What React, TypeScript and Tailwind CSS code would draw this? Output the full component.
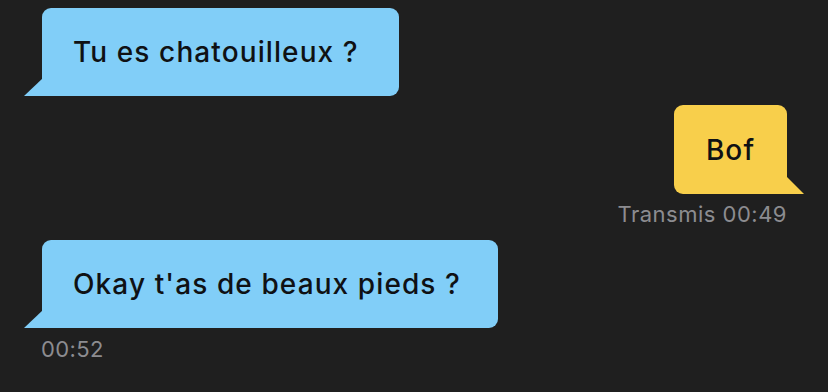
import React from "react";

const Tail = ({ side, color }: { side: "left" | "right"; color: string }) => {
  // the little corner tail under the bubble
  if (side === "left") {
    return (
      <svg
        className="absolute bottom-0 left-[-18px]"
        width="19"
        height="18"
        viewBox="0 0 19 18"
      >
        <path d="M19 0 L19 18 L0 18 Z" fill={color} />
      </svg>
    );
  }
  return (
    <svg
      className="absolute bottom-0 right-[-17px]"
      width="18"
      height="18"
      viewBox="0 0 18 18"
    >
      <path d="M0 0 L0 18 L18 18 Z" fill={color} />
    </svg>
  );
};

const App = () => {
  return (
    <div
      className="w-[828px] h-[392px] bg-[#1f1f1f] overflow-hidden flex flex-col"
      style={{ fontFamily: "Inter, 'Noto Sans', sans-serif" }}
    >
      {/* received */}
      <div className="mt-[8px] ml-[42px] flex">
        <div className="relative w-[357px] h-[88px] bg-[#81cef8] rounded-[9px] rounded-bl-none flex items-center pl-[31px]">
          <span className="text-[28px] font-medium text-[#0f1114] tracking-[1.1px]">
            Tu es chatouilleux ?
          </span>
          <Tail side="left" color="#81cef8" />
        </div>
      </div>

      {/* sent */}
      <div className="mt-[9px] mr-[41px] flex flex-col items-end">
        <div className="relative w-[113px] h-[89px] bg-[#f8cf4b] rounded-[9px] rounded-br-none flex items-center justify-center">
          <span className="text-[28px] font-medium text-[#0f1114] tracking-[1.1px]">
            Bof
          </span>
          <Tail side="right" color="#f8cf4b" />
        </div>
        <div className="mt-[7px] text-[22px] leading-[26px] text-[#8c8c90] tracking-[0.5px]">
          Transmis 00:49
        </div>
      </div>

      {/* received */}
      <div className="mt-[13px] ml-[42px] flex flex-col items-start">
        <div className="relative w-[456px] h-[88px] bg-[#81cef8] rounded-[9px] rounded-bl-none flex items-center pl-[31px]">
          <span className="text-[28px] font-medium text-[#0f1114] tracking-[1.1px]">
            Okay t'as de beaux pieds ?
          </span>
          <Tail side="left" color="#81cef8" />
        </div>
        <div className="mt-[8px] ml-[-1px] text-[22px] leading-[26px] text-[#8c8c90] tracking-[0.4px]">
          00:52
        </div>
      </div>
    </div>
  );
};

export default App;
